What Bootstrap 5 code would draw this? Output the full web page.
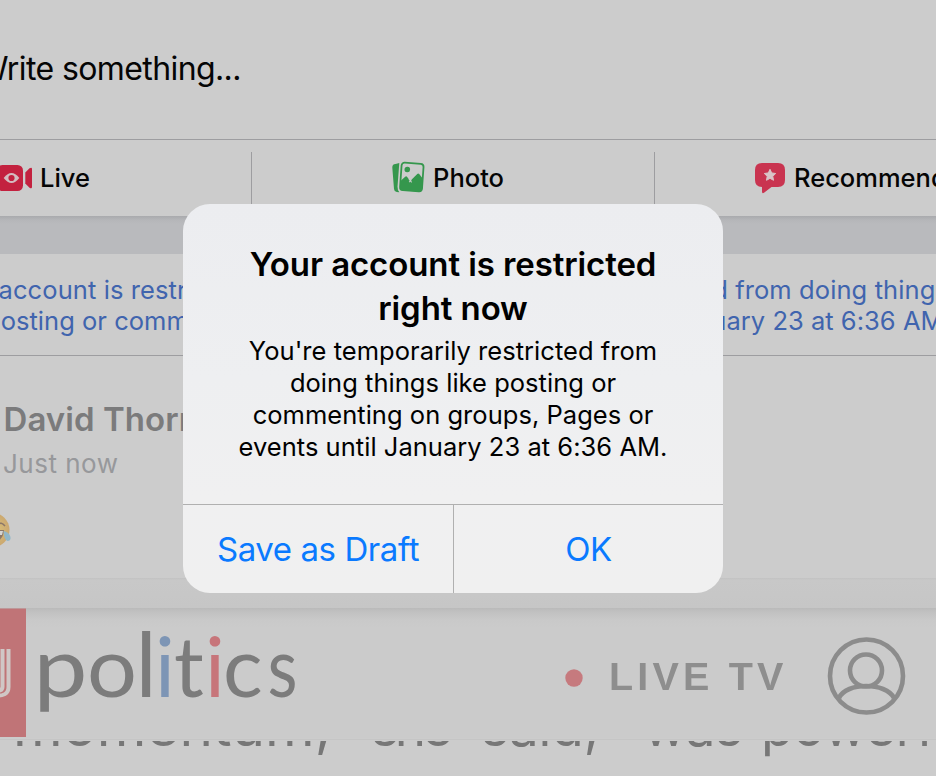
<!DOCTYPE html>
<html lang="en">
<head>
<meta charset="utf-8">
<meta name="viewport" content="width=device-width, initial-scale=1">
<title>Account restricted</title>
<link href="https://cdn.jsdelivr.net/npm/bootstrap@5.3.0/dist/css/bootstrap.min.css" rel="stylesheet">
<style>
body{font-family:Inter,"Liberation Sans",sans-serif;background:#ccc;color:#050505;width:936px;height:776px;overflow:hidden;position:relative}
.composer{height:140px;border-bottom:1px solid #9d9da0;padding-top:43.500px}
.composer-text{font-size:32px;line-height:50px;letter-spacing:-.6px;margin-left:-23px}
.actions{height:76px;font-size:25.5px;font-weight:500;line-height:76px}
.action-cell{height:76px;flex:none}
.live-cell{width:251px}
.photo-cell{width:402px;padding-right:10px}
.recommend-cell{width:320px;padding-left:99px}
.divider{width:1px;height:64px;margin-top:12px;background:#9d9da0;flex:none}
.band{height:38px;background:linear-gradient(#a9aaad,#b5b6b9 4px,#b9babd 8px)}
.notice{height:102px;border-bottom:1px solid #9d9da0;padding-top:19.5px;font-size:25.5px;line-height:31px;color:#4064ae}
.notice-one{margin-left:-1.5px;letter-spacing:.1px}
.notice-two{margin-left:-15px;letter-spacing:.03px}
.post{height:222px;padding-top:41px}
.author{font-size:33px;line-height:44px;font-weight:600;color:#7b7b7c;padding-left:3.500px;letter-spacing:.05px}
.stamp{font-size:26px;line-height:36px;margin-top:5px;padding-left:3px;color:#97989b;letter-spacing:.5px}
.emoji{margin:30px 0 0 -24px}
.strip{height:30px;background:linear-gradient(#c2c2c2,#c8c8c8 2px,#c6c6c6)}
.site-bar{height:130px;background:linear-gradient(#bababa,#c1c1c1 4px,#c9c9c9 12px,#cbcbcb 20px)}
.soft{filter:blur(.6px)}
.article{height:38px;background:#ccc}
.alert-box{left:183px;top:204px;width:540px;height:389px;border-radius:27px;background:linear-gradient(#ecedf0,#eeeff1 45%,#f0f0f1 75%,#f0f0f0);color:#000}
.alert-copy{height:300px;padding-top:38px}
.alert-title{font-size:33px;line-height:44px;font-weight:600;margin:0;letter-spacing:-.1px}
.alert-message{font-size:25.5px;line-height:32px;margin:5px 0 0;letter-spacing:.03px}
.alert-actions{height:89px;border-top:1px solid #b0b0b0}
.alert-btn{font-size:33px;line-height:88px;color:#0a7aff;letter-spacing:-.42px;background:none;border:0;padding:0}
.alert-btn + .alert-btn{border-left:1px solid #b0b0b0}
</style>
<script src="https://cdn.jsdelivr.net/npm/bootstrap@5.3.0/dist/js/bootstrap.bundle.min.js"></script>
</head>
<body>
<main class="d-flex flex-column text-nowrap overflow-hidden">
  <section class="composer"><div class="composer-text">Write something...</div></section>
  <nav class="actions d-flex">
    <div class="action-cell live-cell d-flex align-items-center">
      <svg width="40" height="30" viewBox="0 0 40 30"><rect x="-3" y="2" width="26" height="26" rx="5.5" fill="#c3213f"/><path d="M25.300 9.500 29.500 5.300Q32 3.800 32 6v18q0 2.200-2.500.7L25.300 20.500z" fill="#c3213f"/><path d="M3.700 15Q11.500 5 19.300 15 11.500 25 3.700 15z" fill="#d4bcc0"/><circle cx="11.500" cy="15" r="3.100" fill="#c3213f"/></svg><span>Live</span>
    </div>
    <div class="divider"></div>
    <div class="action-cell photo-cell d-flex align-items-center justify-content-center">
      <svg width="41" height="34" viewBox="0 0 41 34"><path d="M3.500 2.900 7.300 2 5.500 25.500Q5.400 29 7.300 31.200L4.700 31Q2.300 30.800 2 28L.3 6.500Q.1 3.200 3.500 2.900z" fill="#35974d"/><g transform="rotate(4 20 16)"><rect x="8.800" y="2.200" width="22" height="27.600" rx="3" fill="#ccc" stroke="#35974d" stroke-width="1.800"/><path d="M9 20.500 13.200 16.200Q14.200 15.300 15.200 16.300L18.500 20 25 12.600Q26 11.600 27 12.600L31 17v10q0 3-3 3H12q-3 0-3-3z" fill="#35974d"/><path d="m17 17.800 3 3.600M19.500 18.800l-2 2.500" stroke="#ccc" stroke-width="1"/><circle cx="14.800" cy="8.900" r="2.800" fill="#35974d"/></g></svg><span>Photo</span>
    </div>
    <div class="divider"></div>
    <div class="action-cell recommend-cell d-flex align-items-center">
      <svg width="40" height="34" viewBox="0 0 40 34" class="flex-shrink-0"><path d="M8 2h16q7 0 7 7v10q0 7-7 7h-6.500L10 31.800Q8 33 8 30.500V26Q1 26 1 19V9Q1 2 8 2z" fill="#c93450"/><path d="m16 8.300 1.700 3.600 4 .6-2.900 2.800.7 4-3.500-2-3.500 2 .7-4-2.900-2.800 4-.6z" fill="#d9c4c8" stroke="#d9c4c8" stroke-linejoin="round"/></svg><span>Recommend</span>
    </div>
  </nav>
  <div class="band"></div>
  <section class="notice">
    <div class="notice-one">account is restricted right now. You're temporarily restricted from doing things like</div>
    <div class="notice-two">posting or commenting on groups, Pages or events until January 23 at 6:36 AM.</div>
  </section>
  <article class="post">
    <div class="author">David Thorne</div>
    <div class="stamp">Just now</div>
    <svg class="emoji d-block" width="40" height="36" viewBox="-24 0 40 36"><defs><radialGradient id="face"><stop offset=".3" stop-color="#d8be78"/><stop offset="1" stop-color="#cba870"/></radialGradient></defs><circle cx="-8" cy="18" r="17.500" fill="url(#face)"/><path d="M-19 18H4Q3 30-8 30-17 30-19 18z" fill="#8b7768"/><path d="M-17 19H3L2 23H-16z" fill="#d5d5d2"/><path d="M-2 13Q1 9 5 14" fill="none" stroke="#8b7768" stroke-width="1.500"/><path d="M3.500 19Q9 20 10.500 25 11 29 7.500 29 4 28 3.500 19z" fill="#91b7c8"/></svg>
  </article>
  <div class="strip"></div>
  <svg class="site-bar d-block" width="936" height="130" viewBox="0 608 936 130">
    <g class="soft">
    <rect x="-4" y="608.500" width="30" height="128.500" fill="#c07477"/>
    <path d="M-6 695.500Q8.500 697 8.500 687V649M2.500 649v38q0 4-6 4" fill="none" stroke="#d0c7c6" stroke-width="4"/>
    <g font-family="Lato,sans-serif" font-size="83" fill="#7c7c7c">
      <text y="697" x="33.500" textLength="54" lengthAdjust="spacingAndGlyphs">p</text>
      <text y="697" x="87" textLength="50" lengthAdjust="spacingAndGlyphs">o</text>
      <text y="697" x="135.500" font-size="90">l</text>
      <text y="697" x="174">t</text>
      <text y="697" x="223">c</text>
      <text y="697" x="267.500" textLength="30" lengthAdjust="spacingAndGlyphs">s</text>
      <text y="697" x="155" fill="#7d95b5">i</text>
      <text y="697" x="205" fill="#c7757a">i</text>
    </g>
    <circle cx="574" cy="678" r="8.700" fill="#c67a7e"/>
    <text x="609" y="689.500" font-family="Liberation Sans,sans-serif" font-weight="700" font-size="39.500" letter-spacing="4.200" fill="#8e8e8e">LIVE TV</text>
    <g fill="none" stroke="#8c8c8c" stroke-width="4.600"><circle cx="866.500" cy="676" r="36.500"/><circle cx="866" cy="670.500" r="16"/><path d="M839 698C846 682 886 682 894 698"/></g>
    </g>
  </svg>
  <svg class="article d-block" width="936" height="38" viewBox="0 738 936 38">
    <defs><clipPath id="fold"><rect x="0" y="741" width="936" height="35"/></clipPath></defs>
    <path d="M0 739.500H936" stroke="#c5c5c5"/>
    <g clip-path="url(#fold)" font-family="Inter,sans-serif" font-size="53" fill="#777" class="soft">
      <text x="13" y="745.500" textLength="318" lengthAdjust="spacingAndGlyphs">momentum,</text>
      <text x="371" y="745.500" textLength="82">she</text>
      <text x="481" y="745.500" textLength="118">said,</text>
      <text x="643" y="745.500" textLength="100">was</text>
      <text x="761" y="745.500" textLength="218">powerful</text>
    </g>
  </svg>
</main>
<div class="alert-box position-absolute d-flex flex-column overflow-hidden text-center text-nowrap" role="alertdialog" aria-labelledby="alert-heading">
  <div class="alert-copy">
    <h1 class="alert-title" id="alert-heading">Your account is restricted<br>right now</h1>
    <p class="alert-message">You're temporarily restricted from<br>doing things like posting or<br>commenting on groups, Pages or<br>events until January 23 at 6:36 AM.</p>
  </div>
  <div class="alert-actions d-flex">
    <button type="button" class="alert-btn w-50">Save as Draft</button>
    <button type="button" class="alert-btn w-50">OK</button>
  </div>
</div>
</body>
</html>
